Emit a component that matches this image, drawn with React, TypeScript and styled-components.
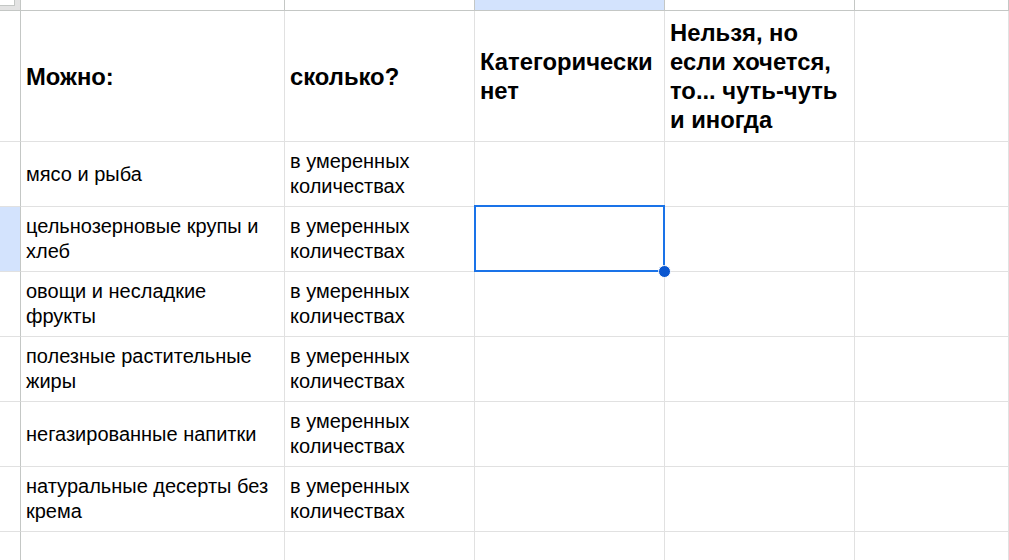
import React from "react";
import styled, { createGlobalStyle, css } from "styled-components";

const Global = createGlobalStyle`
  html, body { margin: 0; padding: 0; background: #fff; overflow: hidden; }
  body { font-family: "Liberation Sans", Arial, sans-serif; color: #000; }
`;

const Sheet = styled.div`
  display: grid;
  grid-template-columns: 21px 264px 190px 190px 190px 1fr;
  grid-template-rows: 11px 131px repeat(7, 65px);
  width: 1009px;
  height: 560px;
  overflow: hidden;
`;

const Cell = styled.div<{ $selected?: boolean }>`
  box-sizing: border-box;
  border-right: 1px solid #e1e1e1;
  border-bottom: 1px solid #e1e1e1;
  display: flex;
  align-items: center;
  padding: 0 5px;
  position: relative;
  min-width: 0;
  ${(p) =>
    p.$selected &&
    css`
      &::after {
        content: "";
        position: absolute;
        top: -2px;
        left: -1px;
        right: -1px;
        bottom: -1px;
        border: 2px solid #1a73e8;
        box-sizing: border-box;
        pointer-events: none;
      }
    `}
`;

const Handle = styled.span`
  position: absolute;
  right: -7px;
  bottom: -7px;
  width: 13px;
  height: 13px;
  border-radius: 50%;
  background: #0b57d0;
  border: 1px solid #fff;
  box-sizing: border-box;
  z-index: 2;
`;

const ColHead = styled.div<{ $active?: boolean }>`
  box-sizing: border-box;
  border-right: 1px solid #c4c7c5;
  border-bottom: 1px solid #c4c7c5;
  background: ${(p) => (p.$active ? "#d3e3fd" : "#fff")};
`;

const Corner = styled.div`
  box-sizing: border-box;
  border-right: 1px solid #c4c7c5;
  border-bottom: 1px solid #c4c7c5;
  background: #e3e3e3;
`;

const CornerInner = styled.div`
  width: 14px;
  height: 5px;
  background: #fff;
  border-right: 1px solid #c4c7c5;
  border-bottom: 1px solid #c4c7c5;
`;

const RowHead = styled.div<{ $active?: boolean }>`
  box-sizing: border-box;
  border-right: 1px solid #c4c7c5;
  border-bottom: 1px solid #e1e1e1;
  background: ${(p) => (p.$active ? "#d3e3fd" : "#fff")};
`;

const HeadText = styled.div`
  font-size: 23.8px;
  font-weight: 700;
  line-height: 29px;
  white-space: nowrap;
`;

const DataText = styled.div`
  font-size: 20px;
  line-height: 25px;
  white-space: nowrap;
`;

const headers: string[][] = [
  ["Можно:"],
  ["сколько?"],
  ["Категорически", "нет"],
  ["Нельзя, но", "если хочется,", "то... чуть-чуть", "и иногда"],
  [],
];

const rows: string[][] = [
  ["мясо и рыба"],
  ["цельнозерновые крупы и", "хлеб"],
  ["овощи и несладкие", "фрукты"],
  ["полезные растительные", "жиры"],
  ["негазированные напитки"],
  ["натуральные десерты без", "крема"],
  [],
];

const Lines = ({ lines }: { lines: string[] }) => (
  <>
    {lines.map((l, i) => (
      <React.Fragment key={i}>
        {i > 0 && <br />}
        {l}
      </React.Fragment>
    ))}
  </>
);

const amount = ["в умеренных", "количествах"];
const SELECTED_ROW = 1;
const SELECTED_COL = 2;

export default function App() {
  return (
    <>
      <Global />
      <Sheet>
        <Corner>
          <CornerInner />
        </Corner>
        {[0, 1, 2, 3, 4].map((c) => (
          <ColHead key={c} $active={c === SELECTED_COL} />
        ))}

        <RowHead />
        {headers.map((h, c) => (
          <Cell key={c}>
            {h.length > 0 && (
              <HeadText>
                <Lines lines={h} />
              </HeadText>
            )}
          </Cell>
        ))}

        {rows.map((r, i) => (
          <React.Fragment key={i}>
            <RowHead $active={i === SELECTED_ROW} />
            <Cell>
              {r.length > 0 && (
                <DataText>
                  <Lines lines={r} />
                </DataText>
              )}
            </Cell>
            <Cell>
              {r.length > 0 && (
                <DataText>
                  <Lines lines={amount} />
                </DataText>
              )}
            </Cell>
            {[2, 3, 4].map((c) => {
              const sel = i === SELECTED_ROW && c === SELECTED_COL;
              return (
                <Cell key={c} $selected={sel}>
                  {sel && <Handle />}
                </Cell>
              );
            })}
          </React.Fragment>
        ))}
      </Sheet>
    </>
  );
}
